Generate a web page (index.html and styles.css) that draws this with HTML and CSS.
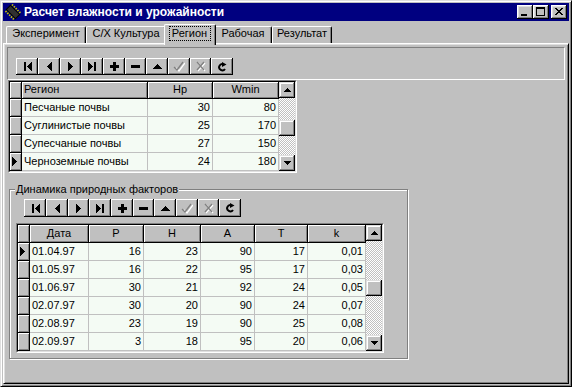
FILE: index.html
```html
<!DOCTYPE html>
<html lang="ru">
<head>
<meta charset="utf-8">
<title>Расчет влажности и урожайности</title>
<link rel="stylesheet" href="styles.css">
</head>
<body>
<div class="window">
  <div class="titlebar">
    <svg class="app-icon" viewBox="0 0 16 16" width="16" height="16">
      <g transform="rotate(-45 8 8)">
        <g fill="#c8c800">
          <rect x="2.5" y="2" width="2" height="1.4"/><rect x="2.5" y="4.6" width="2" height="1.4"/><rect x="2.5" y="7.2" width="2" height="1.4"/><rect x="2.5" y="9.8" width="2" height="1.4"/><rect x="2.5" y="12.4" width="2" height="1.4"/>
          <rect x="11.5" y="2" width="2" height="1.4"/><rect x="11.5" y="4.6" width="2" height="1.4"/><rect x="11.5" y="7.2" width="2" height="1.4"/><rect x="11.5" y="9.8" width="2" height="1.4"/><rect x="11.5" y="12.4" width="2" height="1.4"/>
        </g>
        <rect x="4.5" y="1" width="7" height="14" fill="#000"/>
        <rect x="5.5" y="2" width="5" height="12" fill="#303030"/>
      </g>
    </svg>
    <span class="title">Расчет влажности и урожайности</span>
    <div class="caption-btns">
      <div class="cbtn"><svg viewBox="0 0 16 14" width="16" height="14"><path d="M4 9h6v2H4z"/></svg></div>
      <div class="cbtn"><svg viewBox="0 0 16 14" width="16" height="14"><path d="M3 2h9v2H3z M3 4h1v7H3z M11 4h1v7h-1z M3 10h9v1H3z"/></svg></div>
      <div class="cbtn close"><svg viewBox="0 0 16 14" width="16" height="14"><path d="M4 3h2v1H4z M5 4h2v1H5z M6 5h2v1H6z M7 6h2v1H7z M8 7h2v1H8z M9 8h2v1H9z M10 9h2v1h-2z M10 3h2v1h-2z M9 4h2v1H9z M8 5h2v1H8z M6 7h2v1H6z M5 8h2v1H5z M4 9h2v1H4z"/></svg></div>
    </div>
  </div>

  <div class="tabs">
    <div class="tab w1">Эксперимент</div>
    <div class="tab w2">С/Х Культура</div>
    <div class="tab w3 active"><span class="focus">Регион</span></div>
    <div class="tab w4">Рабочая</div>
    <div class="tab w5">Результат</div>
  </div>

  <div class="page">
    <div class="panel">
      <div class="nav nav-top">
        <div class="nb"><svg viewBox="0 0 9 9" width="9" height="9"><path d="M1 0h2v9H1z M4 4h1v1H4z M5 3h1v3H5z M6 2h1v5H6z M7 1h1v7H7z M8 0h1v9H8z"/></svg></div>
        <div class="nb"><svg viewBox="0 0 9 9" width="9" height="9"><path d="M2 4h1v1H2z M3 3h1v3H3z M4 2h1v5H4z M5 1h1v7H5z M6 0h1v9H6z"/></svg></div>
        <div class="nb"><svg viewBox="0 0 9 9" width="9" height="9"><path d="M2 0h1v9H2z M3 1h1v7H3z M4 2h1v5H4z M5 3h1v3H5z M6 4h1v1H6z"/></svg></div>
        <div class="nb"><svg viewBox="0 0 9 9" width="9" height="9"><path d="M0 0h1v9H0z M1 1h1v7H1z M2 2h1v5H2z M3 3h1v3H3z M4 4h1v1H4z M6 0h2v9H6z"/></svg></div>
        <div class="nb"><svg viewBox="0 0 9 9" width="9" height="9"><path d="M0 3h9v3H0z M3 0h3v9H3z"/></svg></div>
        <div class="nb"><svg viewBox="0 0 9 9" width="9" height="9"><path d="M0 3h9v3H0z"/></svg></div>
        <div class="nb"><svg viewBox="0 0 9 9" width="9" height="9"><path d="M4 2h1v1H4z M3 3h3v1H3z M2 4h5v1H2z M1 5h7v1H1z M0 6h9v1H0z"/></svg></div>
        <div class="nb"><svg viewBox="0 0 12 11" width="12" height="11"><path d="M2 6l3 3 6-8" fill="none" stroke="#fff" stroke-width="1.3" transform="translate(1 1)"/><path d="M1 6l3 3 6-8" fill="none" stroke="#808080" stroke-width="1.3"/></svg></div>
        <div class="nb"><svg viewBox="0 0 12 11" width="12" height="11"><g transform="translate(1 1)" stroke="#fff" stroke-width="1.3" fill="none"><path d="M2 1l7 8 M9 1l-7 8"/></g><g stroke="#808080" stroke-width="1.3" fill="none"><path d="M2 1l7 8 M9 1l-7 8"/></g></svg></div>
        <div class="nb"><svg viewBox="0 0 10 10" width="10" height="10"><path d="M6.5 2.2A3.2 3.2 0 1 0 8 7" fill="none" stroke="#000" stroke-width="2"/><path d="M5 0l4.5 2.5L5 5z"/></svg></div>
      </div>
    </div>

    <div class="grid grid-top">
      <div class="grid-in">
        <div class="gtable t1">
          <div class="c h"></div><div class="c h l">Регион</div><div class="c h">Hp</div><div class="c h">Wmin</div>
          <div class="c h"></div><div class="c">Песчаные почвы</div><div class="c r">30</div><div class="c r">80</div>
          <div class="c h"></div><div class="c">Суглинистые почвы</div><div class="c r">25</div><div class="c r">170</div>
          <div class="c h"></div><div class="c">Супесчаные почвы</div><div class="c r">27</div><div class="c r">150</div>
          <div class="c h ind"><svg viewBox="0 0 5 9" width="5" height="9"><path d="M0 0h1v9H0z M1 1h1v7H1z M2 2h1v5H2z M3 3h1v3H3z M4 4h1v1H4z"/></svg></div><div class="c">Черноземные почвы</div><div class="c r">24</div><div class="c r">180</div>
        </div>
        <div class="vscroll s1">
          <div class="sb"><svg viewBox="0 0 7 4" width="7" height="4"><path d="M3 0h1v1H3z M2 1h3v1H2z M1 2h5v1H1z M0 3h7v1H0z"/></svg></div>
          <div class="track a"></div>
          <div class="sb thumb"></div>
          <div class="track b"></div>
          <div class="sb"><svg viewBox="0 0 7 4" width="7" height="4"><path d="M0 0h7v1H0z M1 1h5v1H1z M2 2h3v1H2z M3 3h1v1H3z"/></svg></div>
        </div>
      </div>
    </div>

    <div class="group">
      <div class="gcaption">Динамика природных факторов</div>
      <div class="nav nav-bottom">
        <div class="nb"><svg viewBox="0 0 9 9" width="9" height="9"><path d="M1 0h2v9H1z M4 4h1v1H4z M5 3h1v3H5z M6 2h1v5H6z M7 1h1v7H7z M8 0h1v9H8z"/></svg></div>
        <div class="nb"><svg viewBox="0 0 9 9" width="9" height="9"><path d="M2 4h1v1H2z M3 3h1v3H3z M4 2h1v5H4z M5 1h1v7H5z M6 0h1v9H6z"/></svg></div>
        <div class="nb"><svg viewBox="0 0 9 9" width="9" height="9"><path d="M2 0h1v9H2z M3 1h1v7H3z M4 2h1v5H4z M5 3h1v3H5z M6 4h1v1H6z"/></svg></div>
        <div class="nb"><svg viewBox="0 0 9 9" width="9" height="9"><path d="M0 0h1v9H0z M1 1h1v7H1z M2 2h1v5H2z M3 3h1v3H3z M4 4h1v1H4z M6 0h2v9H6z"/></svg></div>
        <div class="nb"><svg viewBox="0 0 9 9" width="9" height="9"><path d="M0 3h9v3H0z M3 0h3v9H3z"/></svg></div>
        <div class="nb"><svg viewBox="0 0 9 9" width="9" height="9"><path d="M0 3h9v3H0z"/></svg></div>
        <div class="nb"><svg viewBox="0 0 9 9" width="9" height="9"><path d="M4 2h1v1H4z M3 3h3v1H3z M2 4h5v1H2z M1 5h7v1H1z M0 6h9v1H0z"/></svg></div>
        <div class="nb"><svg viewBox="0 0 12 11" width="12" height="11"><path d="M2 6l3 3 6-8" fill="none" stroke="#fff" stroke-width="1.3" transform="translate(1 1)"/><path d="M1 6l3 3 6-8" fill="none" stroke="#808080" stroke-width="1.3"/></svg></div>
        <div class="nb"><svg viewBox="0 0 12 11" width="12" height="11"><g transform="translate(1 1)" stroke="#fff" stroke-width="1.3" fill="none"><path d="M2 1l7 8 M9 1l-7 8"/></g><g stroke="#808080" stroke-width="1.3" fill="none"><path d="M2 1l7 8 M9 1l-7 8"/></g></svg></div>
        <div class="nb"><svg viewBox="0 0 10 10" width="10" height="10"><path d="M6.5 2.2A3.2 3.2 0 1 0 8 7" fill="none" stroke="#000" stroke-width="2"/><path d="M5 0l4.5 2.5L5 5z"/></svg></div>
      </div>

      <div class="grid grid-bottom">
        <div class="grid-in">
          <div class="gtable t2">
            <div class="c h"></div><div class="c h">Дата</div><div class="c h">P</div><div class="c h">H</div><div class="c h">A</div><div class="c h">T</div><div class="c h">k</div>
            <div class="c h ind"><svg viewBox="0 0 5 9" width="5" height="9"><path d="M0 0h1v9H0z M1 1h1v7H1z M2 2h1v5H2z M3 3h1v3H3z M4 4h1v1H4z"/></svg></div><div class="c">01.04.97</div><div class="c r">16</div><div class="c r">23</div><div class="c r">90</div><div class="c r">17</div><div class="c r">0,01</div>
            <div class="c h"></div><div class="c">01.05.97</div><div class="c r">16</div><div class="c r">22</div><div class="c r">95</div><div class="c r">17</div><div class="c r">0,03</div>
            <div class="c h"></div><div class="c">01.06.97</div><div class="c r">30</div><div class="c r">21</div><div class="c r">92</div><div class="c r">24</div><div class="c r">0,05</div>
            <div class="c h"></div><div class="c">02.07.97</div><div class="c r">30</div><div class="c r">20</div><div class="c r">90</div><div class="c r">24</div><div class="c r">0,07</div>
            <div class="c h"></div><div class="c">02.08.97</div><div class="c r">23</div><div class="c r">19</div><div class="c r">90</div><div class="c r">25</div><div class="c r">0,08</div>
            <div class="c h"></div><div class="c">02.09.97</div><div class="c r">3</div><div class="c r">18</div><div class="c r">95</div><div class="c r">20</div><div class="c r">0,06</div>
          </div>
          <div class="vscroll s2">
            <div class="sb"><svg viewBox="0 0 7 4" width="7" height="4"><path d="M3 0h1v1H3z M2 1h3v1H2z M1 2h5v1H1z M0 3h7v1H0z"/></svg></div>
            <div class="track a"></div>
            <div class="sb thumb"></div>
            <div class="track b"></div>
            <div class="sb"><svg viewBox="0 0 7 4" width="7" height="4"><path d="M0 0h7v1H0z M1 1h5v1H1z M2 2h3v1H2z M3 3h1v1H3z"/></svg></div>
          </div>
        </div>
      </div>
    </div>
  </div>
</div>
</body>
</html>
```

FILE: styles.css
```css
* { box-sizing: border-box; }
html, body { margin: 0; padding: 0; }
body {
  width: 572px;
  height: 387px;
  overflow: hidden;
  background: #c0c0c0;
  font-family: "Liberation Sans", Arial, sans-serif;
  font-size: 11px;
  color: #000;
}
svg { display: block; shape-rendering: crispEdges; }

.window {
  width: 572px;
  height: 387px;
  border: 1px solid;
  border-color: #dfdfdf #000 #000 #dfdfdf;
  box-shadow: inset 1px 1px #fff, inset -1px -1px #808080;
  padding: 2px;
  display: flex;
  flex-direction: column;
}

/* title bar */
.titlebar {
  height: 18px;
  flex: none;
  background: #000080;
  display: flex;
  align-items: center;
  padding: 0 2px;
}
.app-icon { flex: none; shape-rendering: auto; }
.title {
  color: #fff;
  font-weight: bold;
  font-size: 12px;
  margin-left: 3px;
  white-space: nowrap;
}
.caption-btns { margin-left: auto; display: flex; }
.cbtn {
  width: 16px;
  height: 14px;
  background: #c0c0c0;
  box-shadow: inset -1px -1px #000, inset 1px 1px #fff, inset -2px -2px #808080, inset 2px 2px #dfdfdf;
}
.cbtn.close { margin-left: 2px; }

/* tabs */
.tabs {
  height: 22px;
  flex: none;
  display: flex;
  align-items: flex-end;
  padding-left: 3px;
  position: relative;
  z-index: 1;
}
.tab {
  height: 17px;
  border: 1px solid #fff;
  border-right-color: #000;
  border-bottom: 0;
  border-radius: 2px 2px 0 0;
  box-shadow: inset -1px 0 #808080;
  display: flex;
  justify-content: center;
  align-items: flex-start;
  line-height: 13px;
  white-space: nowrap;
  background: #c0c0c0;
}
.w1 { width: 80px; }
.w2 { width: 80px; }
.w3 { width: 48px; }
.w4 { width: 58px; }
.w5 { width: 60px; }
.tab.active {
  width: 52px;
  height: 21px;
  margin: 0 -2px -2px;
  position: relative;
  z-index: 2;
}
.focus {
  margin-top: 1px;
  border: 1px dotted #000;
  padding: 0 3px 0 2px;
  line-height: 13px;
}

/* page */
.page {
  flex: 1;
  border: 1px solid;
  border-color: #fff #000 #000 #fff;
  box-shadow: inset 1px 1px #dfdfdf, inset -1px -1px #808080;
  padding: 3px 3px 0 3px;
  display: flex;
  flex-direction: column;
  align-items: flex-start;
}

.panel {
  width: 558px;
  height: 33px;
  flex: none;
  border: 1px solid;
  border-color: #808080 #fff #fff #808080;
  padding: 10px 0 0 8px;
}

/* navigator */
.nav { display: flex; }
.nav-top { height: 17px; }
.nav-bottom { height: 18px; margin: 3px 0 0 14px; }
.nb {
  width: 22px;
  height: 100%;
  background: #c0c0c0;
  box-shadow: inset -1px -1px #000, inset 1px 1px #fff, inset -2px -2px #808080;
  display: flex;
  align-items: center;
  justify-content: center;
}
.nb:nth-child(3n) { width: 21px; }
.nb:nth-child(8) svg, .nb:nth-child(9) svg, .nb:nth-child(10) svg { shape-rendering: auto; }

/* grids */
.grid {
  flex: none;
  border: 1px solid;
  border-color: #808080 #fff #fff #808080;
}
.grid-in {
  height: 100%;
  border: 1px solid;
  border-color: #000 #dfdfdf #dfdfdf #000;
  display: flex;
  background: #f4fbf4;
}
.grid-top { width: 289px; height: 93px; margin-left: 1px; }
.grid-bottom { width: 368px; height: 130px; margin: 6px 0 0 6px; }

.gtable {
  display: grid;
  align-content: start;
}
.t1 {
  grid-template-columns: 12px 126px 65px 66px;
  grid-template-rows: 17px repeat(4, 18px);
}
.t2 {
  grid-template-columns: 12px 59px 55px 57px 54px 53px 58px;
  grid-template-rows: repeat(7, 18px);
}
.c {
  border-right: 1px solid #c0c0c0;
  border-bottom: 1px solid #c0c0c0;
  padding: 0 2px;
  line-height: 17px;
  white-space: nowrap;
  overflow: hidden;
}
.r { text-align: right; }
.h {
  background: #c0c0c0;
  border-color: #000;
  box-shadow: inset 1px 1px #fff, inset -1px -1px #808080;
  text-align: center;
  line-height: 16px;
}
.t1 .h { line-height: 15px; }
.h.l { text-align: left; }
.ind { display: flex; align-items: center; padding-left: 2px; }

/* scrollbars */
.vscroll {
  width: 16px;
  flex: none;
  display: flex;
  flex-direction: column;
  margin-left: auto;
}
.sb {
  width: 16px;
  height: 16px;
  flex: none;
  background: #c0c0c0;
  box-shadow: inset -1px -1px #000, inset 1px 1px #dfdfdf, inset -2px -2px #808080, inset 2px 2px #fff;
  display: flex;
  align-items: center;
  justify-content: center;
}
.track {
  background: repeating-conic-gradient(#fff 0 25%, #c0c0c0 0 50%) 0 0 / 2px 2px;
}
.s1 .track.a { height: 22px; }
.s1 .track.b { flex: 1; }
.s2 .track.a { height: 39px; }
.s2 .track.b { flex: 1; }

/* group box */
.group {
  width: 399px;
  height: 170px;
  flex: none;
  margin: 16px 0 0 2px;
  border: 1px solid #808080;
  box-shadow: 1px 1px 0 #fff, inset 1px 1px 0 #fff;
  display: flex;
  flex-direction: column;
  align-items: flex-start;
}
.gcaption {
  margin: -7px 0 0 5px;
  padding: 0 1px;
  line-height: 13px;
  background: #c0c0c0;
  white-space: nowrap;
}
```
